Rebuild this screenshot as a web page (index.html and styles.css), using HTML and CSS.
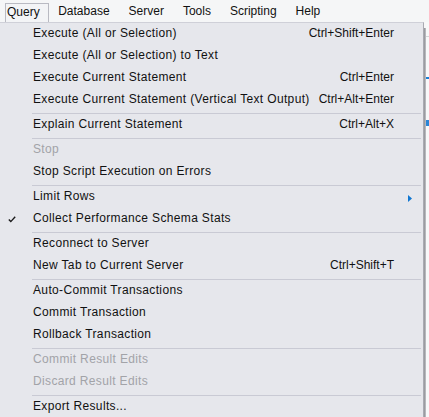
FILE: index.html
```html
<!DOCTYPE html>
<html>
<head>
<meta charset="utf-8">
<link rel="stylesheet" href="styles.css">
</head>
<body>
<div class="menubar">
  <span class="mi active">Query</span>
  <span class="mi">Database</span>
  <span class="mi">Server</span>
  <span class="mi">Tools</span>
  <span class="mi">Scripting</span>
  <span class="mi">Help</span>
</div>
<div class="main">
  <div class="menu">
    <div class="item"><span class="gut"></span><span class="label">Execute (All or Selection)</span><span class="sc">Ctrl+Shift+Enter</span><span class="sub"></span></div>
    <div class="item"><span class="gut"></span><span class="label">Execute (All or Selection) to Text</span><span class="sc"></span><span class="sub"></span></div>
    <div class="item"><span class="gut"></span><span class="label">Execute Current Statement</span><span class="sc">Ctrl+Enter</span><span class="sub"></span></div>
    <div class="item"><span class="gut"></span><span class="label">Execute Current Statement (Vertical Text Output)</span><span class="sc">Ctrl+Alt+Enter</span><span class="sub"></span></div>
    <div class="sep"></div>
    <div class="item"><span class="gut"></span><span class="label">Explain Current Statement</span><span class="sc">Ctrl+Alt+X</span><span class="sub"></span></div>
    <div class="sep"></div>
    <div class="item disabled"><span class="gut"></span><span class="label">Stop</span><span class="sc"></span><span class="sub"></span></div>
    <div class="item"><span class="gut"></span><span class="label">Stop Script Execution on Errors</span><span class="sc"></span><span class="sub"></span></div>
    <div class="sep"></div>
    <div class="item"><span class="gut"></span><span class="label">Limit Rows</span><span class="sc"></span><span class="sub"><svg class="arrow" width="5" height="7" viewBox="0 0 5 7"><polygon points="0,0 4,3.5 0,7" fill="#1177d1"/></svg></span></div>
    <div class="item"><span class="gut"><svg class="check" width="8" height="7" viewBox="0 0 8 7"><path d="M0.8 3.6 L2.8 5.6 L7.2 0.8" fill="none" stroke="#1a1a1a" stroke-width="1.4"/></svg></span><span class="label">Collect Performance Schema Stats</span><span class="sc"></span><span class="sub"></span></div>
    <div class="sep"></div>
    <div class="item"><span class="gut"></span><span class="label">Reconnect to Server</span><span class="sc"></span><span class="sub"></span></div>
    <div class="item"><span class="gut"></span><span class="label">New Tab to Current Server</span><span class="sc">Ctrl+Shift+T</span><span class="sub"></span></div>
    <div class="sep"></div>
    <div class="item"><span class="gut"></span><span class="label">Auto-Commit Transactions</span><span class="sc"></span><span class="sub"></span></div>
    <div class="item"><span class="gut"></span><span class="label">Commit Transaction</span><span class="sc"></span><span class="sub"></span></div>
    <div class="item"><span class="gut"></span><span class="label">Rollback Transaction</span><span class="sc"></span><span class="sub"></span></div>
    <div class="sep"></div>
    <div class="item disabled"><span class="gut"></span><span class="label">Commit Result Edits</span><span class="sc"></span><span class="sub"></span></div>
    <div class="item disabled"><span class="gut"></span><span class="label">Discard Result Edits</span><span class="sc"></span><span class="sub"></span></div>
    <div class="sep"></div>
    <div class="item"><span class="gut"></span><span class="label">Export Results...</span><span class="sc"></span><span class="sub"></span></div>
  </div>
  <div class="shadow"></div>
  <div class="app">
    <div class="app-line gray"></div>
    <div class="app-line blue"></div>
    <div class="app-mark"></div>
  </div>
</div>
</body>
</html>
```

FILE: styles.css
```css
html, body {
  margin: 0;
  padding: 0;
}
body {
  width: 429px;
  height: 417px;
  overflow: hidden;
  background: #f7f7f8;
  font-family: "Liberation Sans", Arial, sans-serif;
  font-size: 12px;
  color: #111;
}
.menubar {
  display: flex;
  height: 22px;
  background: #f5f6f7;
  padding-left: 5px;
  box-sizing: border-box;
}
.mi {
  padding: 0 9.5px;
  line-height: 22px;
  white-space: nowrap;
}
.active {
  margin-top: 3px;
  height: 19px;
  line-height: 16px;
  padding: 0 8px 0 1px;
  border: 1px solid #b9bac2;
  border-bottom: none;
  background: #f3f4f6;
}
.main {
  display: flex;
  height: 395px;
}
.menu {
  width: 423px;
  flex: none;
  background: #e6e7ec;
  border-top: 1px solid #cfd0d8;
  border-right: 1px solid #a9aab2;
  padding-top: 1px;
  box-sizing: content-box;
}
.item {
  display: flex;
  height: 22px;
  line-height: 18px;
  padding-bottom: 4px;
  box-sizing: border-box;
  white-space: nowrap;
}
.gut {
  width: 33px;
  flex: none;
  position: relative;
}
.label {
  flex: 1;
  letter-spacing: 0.35px;
}
.sc {
  flex: none;
}
.sub {
  width: 29px;
  flex: none;
  position: relative;
}
.arrow {
  position: absolute;
  left: 14px;
  top: 8px;
}
.check {
  position: absolute;
  left: 8px;
  top: 7px;
}
.disabled {
  color: #a2a3a8;
}
.sep {
  height: 3px;
  display: flex;
  align-items: center;
  padding: 0 2px 0 32px;
}
.sep::before {
  content: "";
  flex: 1;
  height: 1px;
  background: #c9cad4;
}
.shadow {
  width: 2px;
  flex: none;
  margin-top: 6px;
  background: linear-gradient(to right, #8d8e93, #c4c5ca);
}
.app {
  flex: 1;
  background: #f8f8f9;
  position: relative;
}
.app-line {
  height: 1px;
}
.gray {
  margin-top: 14px;
  background: #d6d6d8;
}
.blue {
  margin-top: 40px;
  height: 2px;
  background: #1a7fd6;
}
.app-mark {
  margin-top: 41px;
  width: 3px;
  height: 6px;
  background: #2b86d6;
}
```
